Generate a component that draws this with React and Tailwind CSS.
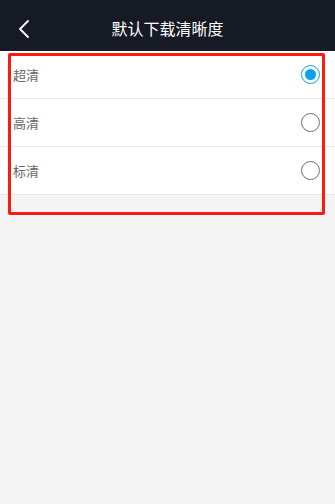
import React from 'react'

const options = [
  { id: 'super', label: '超清', checked: true },
  { id: 'high', label: '高清', checked: false },
  { id: 'std', label: '标清', checked: false },
]

function Radio({ checked }) {
  return checked ? (
    <div className="w-[19px] h-[19px] rounded-full border-[1.5px] border-[#0aa1ed] flex items-center justify-center">
      <div className="w-[11px] h-[11px] rounded-full bg-[#0aa1ed]" />
    </div>
  ) : (
    <div className="w-[19px] h-[19px] rounded-full border-[1.5px] border-[#707070]" />
  )
}

export default function App() {
  return (
    <div className="relative w-[335px] h-[504px] bg-[#f4f4f4] overflow-hidden" style={{ fontFamily: '"Noto Sans CJK SC", "Noto Sans", sans-serif' }}>
      <div className="h-[51px] bg-[#151a24] flex items-center relative">
        <svg className="absolute left-[17px] top-[19px]" width="14" height="20" viewBox="0 0 14 20" fill="none">
          <path d="M11 2 L3 10 L11 18" stroke="#ffffff" strokeWidth="1.8" strokeLinecap="round" strokeLinejoin="round" />
        </svg>
        <div className="flex-1 text-center text-white text-[16px] leading-none pt-[5px]">默认下载清晰度</div>
      </div>
      <div className="bg-white">
        {options.map(o => (
          <div key={o.id} className="h-[48px] border-b border-[#e8e8e8] flex items-center justify-between pl-[13px] pr-[15px]">
            <span className="text-[13px] text-[#666666] pt-[1px]">{o.label}</span>
            <Radio checked={o.checked} />
          </div>
        ))}
      </div>
      <div className="absolute left-[8px] top-[53px] w-[317px] h-[162px] border-[3px] border-[#ff1a0f] rounded-[2px] pointer-events-none" />
    </div>
  )
}
